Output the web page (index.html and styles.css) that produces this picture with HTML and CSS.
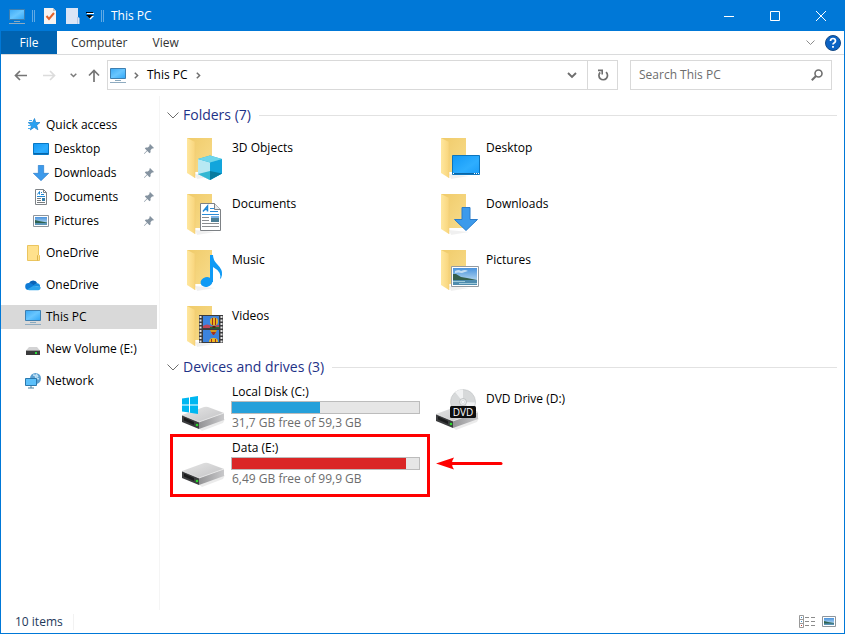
FILE: index.html
```html
<!DOCTYPE html>
<html lang="en">

<head>
  <meta charset="utf-8">
  <title>This PC</title>
  <meta name="viewport" content="width=device-width, initial-scale=1">
  <link rel="stylesheet" href="styles.css">
</head>

<body>

<!-- shared icon shapes -->
<svg class="sprite" width="0" height="0" aria-hidden="true">
  <defs>
    <linearGradient id="g-back" x1="0" y1="0" x2="1" y2="1">
      <stop offset="0" stop-color="#f0cb6a"/><stop offset="1" stop-color="#f8dc8b"/>
    </linearGradient>
    <linearGradient id="g-flap" x1="0" y1="0" x2="1" y2="0">
      <stop offset="0" stop-color="#ffe79e"/><stop offset="1" stop-color="#f8d57c"/>
    </linearGradient>
    <linearGradient id="g-screen" x1="0" y1="0" x2="1" y2="1">
      <stop offset="0" stop-color="#3ba9f5"/><stop offset=".5" stop-color="#68c6ff"/><stop offset="1" stop-color="#2fa6f7"/>
    </linearGradient>
    <linearGradient id="g-desk" x1="0" y1="0" x2="1" y2="1">
      <stop offset="0" stop-color="#1298f6"/><stop offset=".6" stop-color="#2eaeff"/><stop offset="1" stop-color="#1a9cf8"/>
    </linearGradient>
    <linearGradient id="g-top" x1="0" y1="0" x2="1" y2="1">
      <stop offset="0" stop-color="#e6e6e6"/><stop offset="1" stop-color="#c2c2c4"/>
    </linearGradient>
    <linearGradient id="g-side" x1="0" y1="0" x2="1" y2="0">
      <stop offset="0" stop-color="#939395"/><stop offset="1" stop-color="#c9c9cb"/>
    </linearGradient>
    <linearGradient id="g-sky" x1="0" y1="0" x2="0" y2="1">
      <stop offset="0" stop-color="#4a93dd"/><stop offset="1" stop-color="#d5ecf6"/>
    </linearGradient>
  </defs>
  <symbol id="i-pc" viewBox="0 0 16 16">
    <path d="M.5 1.500h15v10H.5z" fill="url(#g-screen)" stroke="#3e7fb0"/>
    <path d="M5 13.500h6" stroke="#8aa9bd"/>
    <path d="M0 15.500h16" stroke="#8fabc0"/>
  </symbol>
  <symbol id="i-folder" viewBox="0 0 48 48">
    <path d="M17 40l20 2-18 3z" fill="#000" opacity=".06"/>
    <path d="M9 4h25v34H9z" fill="url(#g-back)"/>
    <path d="M9 4l8 4v36l-8-5z" fill="url(#g-flap)"/>
    <path d="M17 8v36" stroke="#f2cf77" stroke-width=".6"/>
  </symbol>
  <symbol id="i-arrow" viewBox="0 0 24 24">
    <path d="M8 .5h8v12h7.500L12 23.500.5 12.500H8z" fill="#3c9aeb" stroke="#2a7cca"/>
  </symbol>
  <symbol id="i-photo" viewBox="0 0 28 21">
    <path d="M.5.5h27v20H.5z" fill="#fff" stroke="#949ba1"/>
    <path d="M2 2h24v17H2z" fill="url(#g-sky)"/>
    <path d="M4 5q4-2 6 0 4-2 7 0l-6 2q-4-1-7 0z" fill="#eef7fc" opacity=".7"/>
    <path d="M2 8l3 0 5 3 6 1 10 2v1H2z" fill="#355f4c"/>
    <path d="M2 14h24v5H2z" fill="#4f8cae"/>
    <path d="M2 15.500h12M8 17.500h18" stroke="#9fc9d9"/>
  </symbol>
  <symbol id="i-photo-small" viewBox="0 0 16 12">
    <path d="M.5.5h15v11H.5z" fill="#fff" stroke="#8d959c"/>
    <path d="M2 2h12v8H2z" fill="url(#g-sky)"/>
    <path d="M2 5l4 1 8 1.500V8H2z" fill="#2f6350"/>
    <path d="M2 8h12v2H2z" fill="#5a95b8"/>
  </symbol>
  <symbol id="i-doc" viewBox="0 0 21 28">
    <path d="M.5.5h14l6 6v21H.5z" fill="#fff" stroke="#7d8185"/>
    <path d="M14.500.5v6h6" fill="#e8eaec" stroke="#7d8185"/>
    <path d="M3 8.500L7.500 3v5.500M4.800 6.500h2.700" fill="none" stroke="#1e86d4" stroke-width="1.500"/>
    <path d="M10 5.500h4M10 8.500h8M2 11.500h17" stroke="#2a8cd8"/>
    <path d="M11 13h8v6h-8z" fill="#4a7e96"/>
    <path d="M11 13h8v2h-8z" fill="#7db5e6"/>
    <path d="M2 14.500h7M2 17.500h7M2 20.500h17M2 23.500h17" stroke="#8a8d90"/>
  </symbol>
  <symbol id="i-drive" viewBox="0 0 48 48">
    <path d="M20 42l27-9-2 4-21 8z" fill="#000" opacity=".08"/>
    <path d="M4 29L26 21q2-.5 4 0l16 6-25 9z" fill="url(#g-top)"/>
    <path d="M21 36l25-9v7L21 43z" fill="url(#g-side)"/>
    <path d="M4 29l17 7v7L4 36z" fill="#3c3d3f"/>
    <path d="M6 31.500l10 4.500v3L6 34.500z" fill="#1b1c1d"/>
    <path d="M4 29l17 7 25-9" fill="none" stroke="#f1f1f1" stroke-width=".7"/>
    <circle cx="19" cy="39" r="1.300" fill="#2bd82b"/>
  </symbol>
  <symbol id="i-pin" viewBox="0 0 10 10">
    <path d="M6 0l4 4-1 .6-1-.1-1.500 1.700.1 2-1.100 1L3.300 7 .6 9.700 0 9.900.2 9.300 2.900 6.600.8 4.500l1-1.100 2 .1L5.500 2l-.1-1z" fill="#8593a0"/>
  </symbol>
</svg>

<div class="window">

  <header class="titlebar">
    <svg class="icon" viewBox="0 0 16 16"><use href="#i-pc"/></svg>
    <span class="divider"></span>
    <button class="quick" type="button" aria-label="Properties">
      <svg width="12" height="16" viewBox="0 0 12 16"><path d="M0 0h9l3 3v13H0z" fill="#f6f3f1"/><path d="M9 0v3h3" fill="#c9c4c0"/><path d="M2.500 8l2.500 3 5-6" fill="none" stroke="#e2622b" stroke-width="2"/></svg>
    </button>
    <button class="quick" type="button" aria-label="New folder">
      <svg width="14" height="16" viewBox="0 0 14 16"><path d="M0 0h12v9l1.500 1v6H0z" fill="#dbe5f6"/><path d="M11.500 9v7" stroke="#b4c8e8"/></svg>
    </button>
    <button class="quick-more" type="button" aria-label="Customize toolbar">
      <svg width="8" height="8" viewBox="0 0 8 8"><path d="M1 1.500h7" stroke="#fff"/><path d="M0 .5h7" stroke="#000"/><path d="M1 4h7L4.500 7.500z" fill="#fff"/><path d="M0 3h7L3.500 6.500z" fill="#000"/></svg>
    </button>
    <span class="divider"></span>
    <h1 class="title">This PC</h1>
    <div class="window-buttons">
      <button type="button" aria-label="Minimize"><svg width="10" height="10"><path d="M0 5.500h10" stroke="#fff"/></svg></button>
      <button type="button" aria-label="Maximize"><svg width="10" height="10"><path d="M.5.5h9v9h-9z" fill="none" stroke="#fff"/></svg></button>
      <button type="button" aria-label="Close"><svg width="10" height="10"><path d="M0 0l10 10M10 0L0 10" stroke="#fff"/></svg></button>
    </div>
  </header>

  <nav class="ribbon">
    <button class="tab tab-file" type="button">File</button>
    <button class="tab" type="button">Computer</button>
    <button class="tab" type="button">View</button>
    <div class="ribbon-end">
      <button type="button" aria-label="Expand the ribbon"><svg width="9" height="6" viewBox="0 0 9 6"><path d="M.5.5l4 4 4-4" fill="none" stroke="#8c8c8c"/></svg></button>
      <button type="button" aria-label="Help">
        <svg width="16" height="16" viewBox="0 0 16 16"><circle cx="8" cy="8" r="7.500" fill="#0b63c4" stroke="#164a86"/><path d="M5.500 6q0-2.500 2.500-2.500T10.500 6Q10.500 7 9 8q-1 .6-1 1.600" fill="none" stroke="#fff" stroke-width="1.700"/><path d="M7.100 11h1.800v1.800H7.100z" fill="#fff"/></svg>
      </button>
    </div>
  </nav>

  <div class="toolbar">
    <div class="history">
      <button type="button" aria-label="Back"><svg width="13" height="11" viewBox="0 0 13 11"><path d="M13 5.500H1.500M6 1L1.500 5.500 6 10" fill="none" stroke="#757575" stroke-width="1.700"/></svg></button>
      <button type="button" aria-label="Forward"><svg width="13" height="11" viewBox="0 0 13 11"><path d="M0 5.500h11.500M7 1l4.500 4.500L7 10" fill="none" stroke="#dcdcdc" stroke-width="1.700"/></svg></button>
      <button class="recent" type="button" aria-label="Recent locations"><svg width="7" height="5" viewBox="0 0 7 5"><path d="M.7.700l2.800 2.800L6.300.700" fill="none" stroke="#7b7b7b" stroke-width="1.500"/></svg></button>
      <button type="button" aria-label="Up"><svg width="12" height="13" viewBox="0 0 12 13"><path d="M6 13V1.500M1 6.500l5-5 5 5" fill="none" stroke="#757575" stroke-width="1.700"/></svg></button>
    </div>
    <div class="address">
      <svg class="icon" viewBox="0 0 16 16"><use href="#i-pc"/></svg>
      <svg class="crumb-arrow" width="5" height="7" viewBox="0 0 5 7"><path d="M.8.700l2.800 2.800L.8 6.300" fill="none" stroke="#6e6e6e" stroke-width="1.500"/></svg>
      <a class="crumb" href="#">This PC</a>
      <svg class="crumb-arrow" width="5" height="7" viewBox="0 0 5 7"><path d="M.8.700l2.800 2.800L.8 6.300" fill="none" stroke="#6e6e6e" stroke-width="1.500"/></svg>
      <button class="address-drop" type="button" aria-label="Previous locations"><svg width="10" height="7" viewBox="0 0 10 7"><path d="M1 1l4 4 4-4" fill="none" stroke="#6e6e6e" stroke-width="1.900"/></svg></button>
      <button class="refresh" type="button" aria-label="Refresh"><svg width="12" height="12" viewBox="0 0 12 12"><path d="M9 3.200a4.300 4.300 0 1 1-5.800.2" fill="none" stroke="#6e6e6e" stroke-width="1.700"/><path d="M1 1.400h4.200v4.200" fill="none" stroke="#6e6e6e" stroke-width="1.600"/></svg></button>
    </div>
    <form class="search">
      <input type="search" placeholder="Search This PC" aria-label="Search This PC">
      <svg width="12" height="12" viewBox="0 0 12 12"><circle cx="7.500" cy="4.500" r="3.500" fill="none" stroke="#6e6e6e" stroke-width="1.600"/><path d="M5 7L.8 11.200" stroke="#6e6e6e" stroke-width="2"/></svg>
    </form>
  </div>

  <div class="body">

    <nav class="sidebar">
      <div class="tree-group">
        <a class="node" href="#"><svg class="icon" viewBox="0 0 16 16"><path d="M9.500 1.500l1.300 4H15l-3.300 2.700 1.200 4.600-3.700-2.500L5.300 13l1.200-4.500L3.200 5.600l4.400-.2z" fill="#27a1f2" stroke="#1a80cc" stroke-width=".7"/><path d="M4 3.500h3M3 8.500h3M3 11.500h2.500" stroke="#48aef2"/></svg>Quick access</a>
        <a class="node node-child" href="#"><svg class="icon" viewBox="0 0 16 16"><path d="M.5 2.500h15v11H.5z" fill="url(#g-desk)" stroke="#0878c4"/><path d="M1 12.500h14" stroke="#0765a8"/></svg>Desktop<svg class="pin" viewBox="0 0 10 10"><use href="#i-pin"/></svg></a>
        <a class="node node-child" href="#"><svg class="icon" viewBox="0 0 24 24"><use href="#i-arrow"/></svg>Downloads<svg class="pin" viewBox="0 0 10 10"><use href="#i-pin"/></svg></a>
        <a class="node node-child" href="#"><svg class="icon" viewBox="0 0 16 16"><path d="M2.500.5h8l3 3v12h-11z" fill="#fff" stroke="#7f8488"/><path d="M10.500.5v3h3" fill="none" stroke="#7f8488"/><path d="M4.500 5.500l2-3v3M8 3.500h1M8 5.500h3M4 7.500h8" fill="none" stroke="#1f86d2"/><path d="M9 9h3v3H9z" fill="#377ca5"/><path d="M4 9.500h4M4 11.500h4M4 13.500h8" stroke="#777c80"/></svg>Documents<svg class="pin" viewBox="0 0 10 10"><use href="#i-pin"/></svg></a>
        <a class="node node-child" href="#"><svg class="icon" viewBox="0 0 16 16"><use href="#i-photo-small" y="2" width="16" height="12"/></svg>Pictures<svg class="pin" viewBox="0 0 10 10"><use href="#i-pin"/></svg></a>
      </div>
      <a class="node" href="#"><svg class="icon" viewBox="0 0 16 16"><path d="M2.500.5h11v9l1 1v5h-12z" fill="#ffe18c" stroke="#ebc55f"/><path d="M12.500 15.500v-5l1-1" fill="none" stroke="#dcb34a"/></svg>OneDrive</a>
      <a class="node" href="#"><svg class="icon" viewBox="0 0 16 16"><path d="M4 6a4.500 4.500 0 0 1 8.300.3L8 9z" fill="#0a63b8"/><path d="M3.500 13a3.500 3.500 0 0 1 .4-7Q6 5.500 10 9l-2 4z" fill="#0f7bd6"/><path d="M8 9q2-3 4.500-2.700A3.400 3.400 0 0 1 15 10z" fill="#178bdc"/><path d="M2 12.500L8.500 8.800 15.500 10a2.500 2.500 0 0 1-2.500 3.300H4z" fill="#2da4ec"/></svg>OneDrive</a>
      <a class="node node-selected" href="#"><svg class="icon" viewBox="0 0 16 16"><use href="#i-pc"/></svg>This PC</a>
      <a class="node" href="#"><svg class="icon" viewBox="0 0 16 16"><path d="M4 6h8l3 3.500H1z" fill="#d3d3d4"/><path d="M1 9.500h14V14H1z" fill="#3a3b3c"/><path d="M1 9.500h14" stroke="#9a9a9a"/><path d="M10 12h2" stroke="#28dc3c" stroke-width="2"/></svg>New Volume (E:)</a>
      <a class="node" href="#"><svg class="icon" viewBox="0 0 16 16"><circle cx="10.500" cy="5.500" r="5.500" fill="#5b9fd0"/><path d="M8 2q3 0 3 3l3 1M11 1l2 3" fill="none" stroke="#bfe0f4" stroke-width="1.500"/><path d="M.5 5.500h11v7H.5z" fill="#5cc0fa" stroke="#2a78ad"/><path d="M3 15h6M6 13v2" stroke="#48809f"/></svg>Network</a>
    </nav>

    <main class="content">

      <section>
        <h2 class="group-title"><svg width="12" height="7" viewBox="0 0 12 7"><path d="M.5.500L6 6 11.500.500" fill="none" stroke="#6d6d6d"/></svg>Folders (7)</h2>
        <div class="tiles">
          <a class="tile" href="#">
            <svg class="tile-icon" viewBox="0 0 48 48"><use href="#i-folder"/><path d="M20 25l12-3.500L44 25v14.500L32 46l-12-6z" fill="#25b4dc"/><path d="M20 25l12 3.500V46l-12-6z" fill="#b8e9f3"/><path d="M32 28.500L44 25v14.500L32 46z" fill="#12a5dc"/><path d="M20 25l12-3.500L44 25l-12 3.500z" fill="#6fd6ea"/><path d="M20 40l12-3v9z" fill="#32b7d3"/><path d="M32 37l12 2.500L32 46z" fill="#087b9f"/></svg>
            <span class="tile-name">3D Objects</span>
          </a>
          <a class="tile" href="#">
            <svg class="tile-icon" viewBox="0 0 48 48"><use href="#i-folder"/><path d="M20.500 21.500h27v19h-27z" fill="url(#g-desk)" stroke="#0d75bd"/><path d="M21 39.500h26" stroke="#0b66a5"/><path d="M21 39.500h1M42 39.500h1M44 39.500h1M46 39.500h1" stroke="#fff"/></svg>
            <span class="tile-name">Desktop</span>
          </a>
          <a class="tile" href="#">
            <svg class="tile-icon" viewBox="0 0 48 48"><use href="#i-folder"/><use href="#i-doc" x="22" y="13" width="21" height="28"/></svg>
            <span class="tile-name">Documents</span>
          </a>
          <a class="tile" href="#">
            <svg class="tile-icon" viewBox="0 0 48 48"><use href="#i-folder"/><use href="#i-arrow" x="22" y="17" width="24" height="24"/></svg>
            <span class="tile-name">Downloads</span>
          </a>
          <a class="tile" href="#">
            <svg class="tile-icon" viewBox="0 0 48 48"><use href="#i-folder"/><ellipse cx="28.500" cy="36" rx="6" ry="4.800" transform="rotate(-14 28.500 36)" fill="#0f9af5"/><path d="M32 9h3q0 5 4 9 6 6 5 11-.5 3-2 4 2-7-7-12v15h-3z" fill="#0f9af5"/></svg>
            <span class="tile-name">Music</span>
          </a>
          <a class="tile" href="#">
            <svg class="tile-icon" viewBox="0 0 48 48"><use href="#i-folder"/><use href="#i-photo" x="19" y="20" width="28" height="21"/></svg>
            <span class="tile-name">Pictures</span>
          </a>
          <a class="tile" href="#">
            <svg class="tile-icon" viewBox="0 0 48 48"><use href="#i-folder"/><path d="M21 13h24v28H21z" fill="#3b3b3d"/><path d="M22.500 14v27M43.500 14v27" stroke="#e4e4e4" stroke-width="2" stroke-dasharray="2 1.500"/><path d="M25 14h16v12H25zM25 28h16v12H25z" fill="#3c83de"/><path d="M25 24q4-3 8 0l8-1v3H25z" fill="#bd4658"/><path d="M32 25h9v1.500h-9z" fill="#1e6e34"/><circle cx="36" cy="19.500" r="4" fill="#e9b420"/><path d="M34.500 16v7M37.500 16v7" stroke="#9c2a1f"/><path d="M34.500 24h3v2h-3z" fill="#4d2a14"/><path d="M32 28h7l-2 4h-3z" fill="#d79a1d"/><path d="M33 30h5l-2 3h-1z" fill="#a22f22"/><path d="M31 40q0-4 4.500-4t4.500 4z" fill="#edb91f"/><path d="M33.500 37v3M37.500 37v3" stroke="#a03022"/></svg>
            <span class="tile-name">Videos</span>
          </a>
        </div>
      </section>

      <section>
        <h2 class="group-title"><svg width="12" height="7" viewBox="0 0 12 7"><path d="M.5.500L6 6 11.500.500" fill="none" stroke="#6d6d6d"/></svg>Devices and drives (3)</h2>
        <div class="tiles">
          <a class="tile tile-drive" href="#">
            <svg class="tile-icon" viewBox="0 0 48 48"><use href="#i-drive"/><path d="M4 12.500l7-1v7H4zM12 11.300l8-1.300v8.500h-8zM4 19.500h7v7l-7-1zM12 19.500h8V28l-8-1.300z" fill="#00b7f1"/></svg>
            <div class="drive-info">
              <span class="tile-name">Local Disk (C:)</span>
              <div class="usage"><div class="usage-fill" style="width: 47%"></div></div>
              <span class="drive-free">31,7 GB free of 59,3 GB</span>
            </div>
          </a>
          <a class="tile tile-dvd" href="#">
            <svg class="tile-icon" viewBox="0 0 48 48"><use href="#i-drive" y="-1"/><circle cx="31" cy="16" r="12.500" fill="#d7d9da" stroke="#bfc2c4" stroke-width=".6"/><path d="M31 16L23 6q4-3 8-2.500zM31 16l9 8.500q3-4 3-8z" fill="#f1f2f3"/><circle cx="31" cy="16" r="3.500" fill="#eceeee" stroke="#b2b5b8" stroke-width=".7"/><circle cx="31" cy="16" r="1.500" fill="#fff" stroke="#c2c5c8" stroke-width=".5"/><rect x="18" y="20" width="26" height="12" rx="1.500" fill="#0e0e0f"/><text class="dvd-label" x="31" y="30" text-anchor="middle">DVD</text></svg>
            <span class="tile-name">DVD Drive (D:)</span>
          </a>
          <a class="tile tile-drive tile-marked" href="#">
            <svg class="tile-icon" viewBox="0 0 48 48"><use href="#i-drive"/></svg>
            <div class="drive-info">
              <span class="tile-name">Data (E:)</span>
              <div class="usage usage-full"><div class="usage-fill" style="width: 93%"></div></div>
              <span class="drive-free">6,49 GB free of 99,9 GB</span>
            </div>
            <svg class="marker-arrow" width="67" height="14" viewBox="0 0 67 14"><path d="M12 7.500h53" stroke="#f00" stroke-width="3" stroke-linecap="round"/><path d="M0 7.500l18-6q-4 6 0 12z" fill="#f00"/></svg>
          </a>
        </div>
      </section>

    </main>
  </div>

  <footer class="statusbar">
    <span class="count">10 items</span>
    <div class="views">
      <button type="button" aria-label="Details view"><svg width="16" height="13" viewBox="0 0 16 13"><path d="M.5.500h4v12h-4zM.5 4.500h4M.5 8.500h4" fill="none" stroke="#999"/><path d="M2 2.500h1M2 6.500h1" stroke="#3f8fc8"/><path d="M2 10.500h1" stroke="#c0392b"/><path d="M6 2.500h4M12 2.500h4M6 6.500h4M12 6.500h4M6 10.500h4M12 10.500h4" stroke="#8c8c8c"/></svg></button>
      <button type="button" aria-label="Large icons view"><svg width="14" height="11" viewBox="0 0 14 11"><path d="M.5.500h13v10H.5z" fill="#fff" stroke="#8d959c"/><path d="M2 2h10v7H2z" fill="url(#g-sky)"/><path d="M2 5l4 1 6 1v1H2z" fill="#2f6350"/><path d="M2 7.500h10V9H2z" fill="#5a95b8"/></svg></button>
    </div>
  </footer>

</div>

</body>

</html>
```
FILE: styles.css
```css
* {
  box-sizing: border-box;
}

body {
  margin: 0;
  font-family: "Open Sans", "Noto Sans", sans-serif;
  font-size: 12px;
  line-height: 16px;
  color: #000;
}

a {
  color: inherit;
  text-decoration: none;
}

button {
  display: flex;
  align-items: center;
  justify-content: center;
  padding: 0;
  border: 0;
  background: none;
  font: inherit;
  color: inherit;
}

svg {
  display: block;
  flex: none;
}

.sprite {
  position: absolute;
}

.icon {
  width: 16px;
  height: 16px;
}

.window {
  display: flex;
  flex-direction: column;
  min-height: 100vh;
  border: 1px solid #0078d7;
  border-top: 0;
  background: #fff;
}

/* title bar */

.titlebar {
  display: flex;
  align-items: center;
  height: 31px;
  padding-left: 8px;
  background: #0078d7;
  color: #fff;
}

.divider {
  width: 3px;
  height: 12px;
  margin: 0 7px;
  border: 1px solid #60aae5;
  border-width: 0 1px;
}

.quick {
  margin: 0 6px 0 2px;
}

.quick + .quick {
  margin-left: 4px;
}

.title {
  margin: 0;
  font-size: 12px;
  font-weight: normal;
}

.window-buttons {
  display: flex;
  align-self: stretch;
  margin-left: auto;
}

.window-buttons button {
  width: 46px;
}

/* ribbon */

.ribbon {
  display: flex;
  height: 24px;
  border-bottom: 1px solid #dadbdc;
}

.tab {
  padding: 0 11px 0 14px;
  color: #333;
}

.tab-file {
  width: 56px;
  padding: 0;
  background: #0063b1;
  color: #fff;
}

.ribbon-end {
  display: flex;
  gap: 10px;
  margin-left: auto;
  padding-right: 3px;
}

/* navigation and address */

.toolbar {
  display: flex;
  gap: 12px;
  height: 41px;
  padding: 5px 12px 6px 13px;
}

.history {
  display: flex;
  align-items: center;
  gap: 16px;
  margin-right: -5px;
}

.recent {
  margin: 0 -5px 0 -2px;
}

.address {
  display: flex;
  flex: 1;
  align-items: center;
  padding-left: 2px;
  border: 1px solid #d9d9d9;
}

.crumb-arrow {
  margin: 0 8px;
}

.address-drop {
  width: 30px;
  height: 100%;
  margin-left: auto;
}

.refresh {
  width: 30px;
  height: 100%;
  border-left: 1px solid #d9d9d9;
}

.search {
  display: flex;
  align-items: center;
  width: 202px;
  padding: 0 8px;
  border: 1px solid #d9d9d9;
}

.search input {
  flex: 1;
  min-width: 0;
  padding: 0;
  border: 0;
  background: none;
  font: inherit;
}

.search input::placeholder {
  color: #6d6d6d;
}

/* panes */

.body {
  display: flex;
  flex: 1;
}

.sidebar {
  display: flex;
  flex-direction: column;
  gap: 8px;
  width: 159px;
  padding: 17px 2px 0 0;
  border-right: 1px solid #f5f5f5;
}

.node {
  display: flex;
  align-items: center;
  gap: 5px;
  height: 24px;
  padding-left: 24px;
  white-space: nowrap;
}

.node-child {
  padding-left: 32px;
}

.node-selected {
  background: #d9d9d9;
}

.pin {
  width: 10px;
  height: 10px;
  margin: 0 3px 0 auto;
}

.content {
  flex: 1;
  padding: 8px 7px 0 7px;
}

.group-title {
  display: flex;
  align-items: center;
  gap: 4px;
  height: 22px;
  margin: 0 0 6px;
  font-size: 14px;
  font-weight: normal;
  color: #1e3287;
}

.group-title::after {
  content: "";
  flex: 1;
  height: 1px;
  margin-left: 4px;
  background: #e2e2e2;
}

.tiles {
  display: grid;
  grid-template-columns: repeat(auto-fill, 254px);
  padding-left: 11px;
}

.tile {
  position: relative;
  display: flex;
  gap: 6px;
  height: 56px;
  padding-top: 2px;
}

.tile-icon {
  width: 48px;
  height: 48px;
}

.tile-name {
  margin-top: 6px;
}

.tile-dvd .tile-name {
  margin-top: 5px;
}

/* drives */

.drive-info {
  display: flex;
  flex-direction: column;
  width: 188px;
  margin-top: -2px;
}

.drive-info .tile-name {
  margin: 0;
}

.usage {
  height: 13px;
  margin: 1px 0 1px -1px;
  border: 1px solid #bcbcbc;
  background: #e6e6e6;
}

.usage-fill {
  height: 100%;
  background: #26a0da;
}

.usage-full .usage-fill {
  background: #da2626;
}

.drive-free {
  color: #6d6d6d;
}

.dvd-label {
  font-size: 10px;
  fill: #fff;
}

.tile-marked::after {
  content: "";
  position: absolute;
  top: -6px;
  right: 2px;
  bottom: -1px;
  left: -8px;
  border: 3px solid #f00;
}

.marker-arrow {
  position: absolute;
  top: 16px;
  left: 258px;
}

/* status bar */

.statusbar {
  display: flex;
  align-items: center;
  height: 23px;
  padding: 0 8px 0 14px;
}

.count {
  padding-right: 10px;
  border-right: 1px solid #f2f2f2;
  color: #1e395b;
}

.views {
  display: flex;
  gap: 7px;
  margin-left: auto;
}
```
